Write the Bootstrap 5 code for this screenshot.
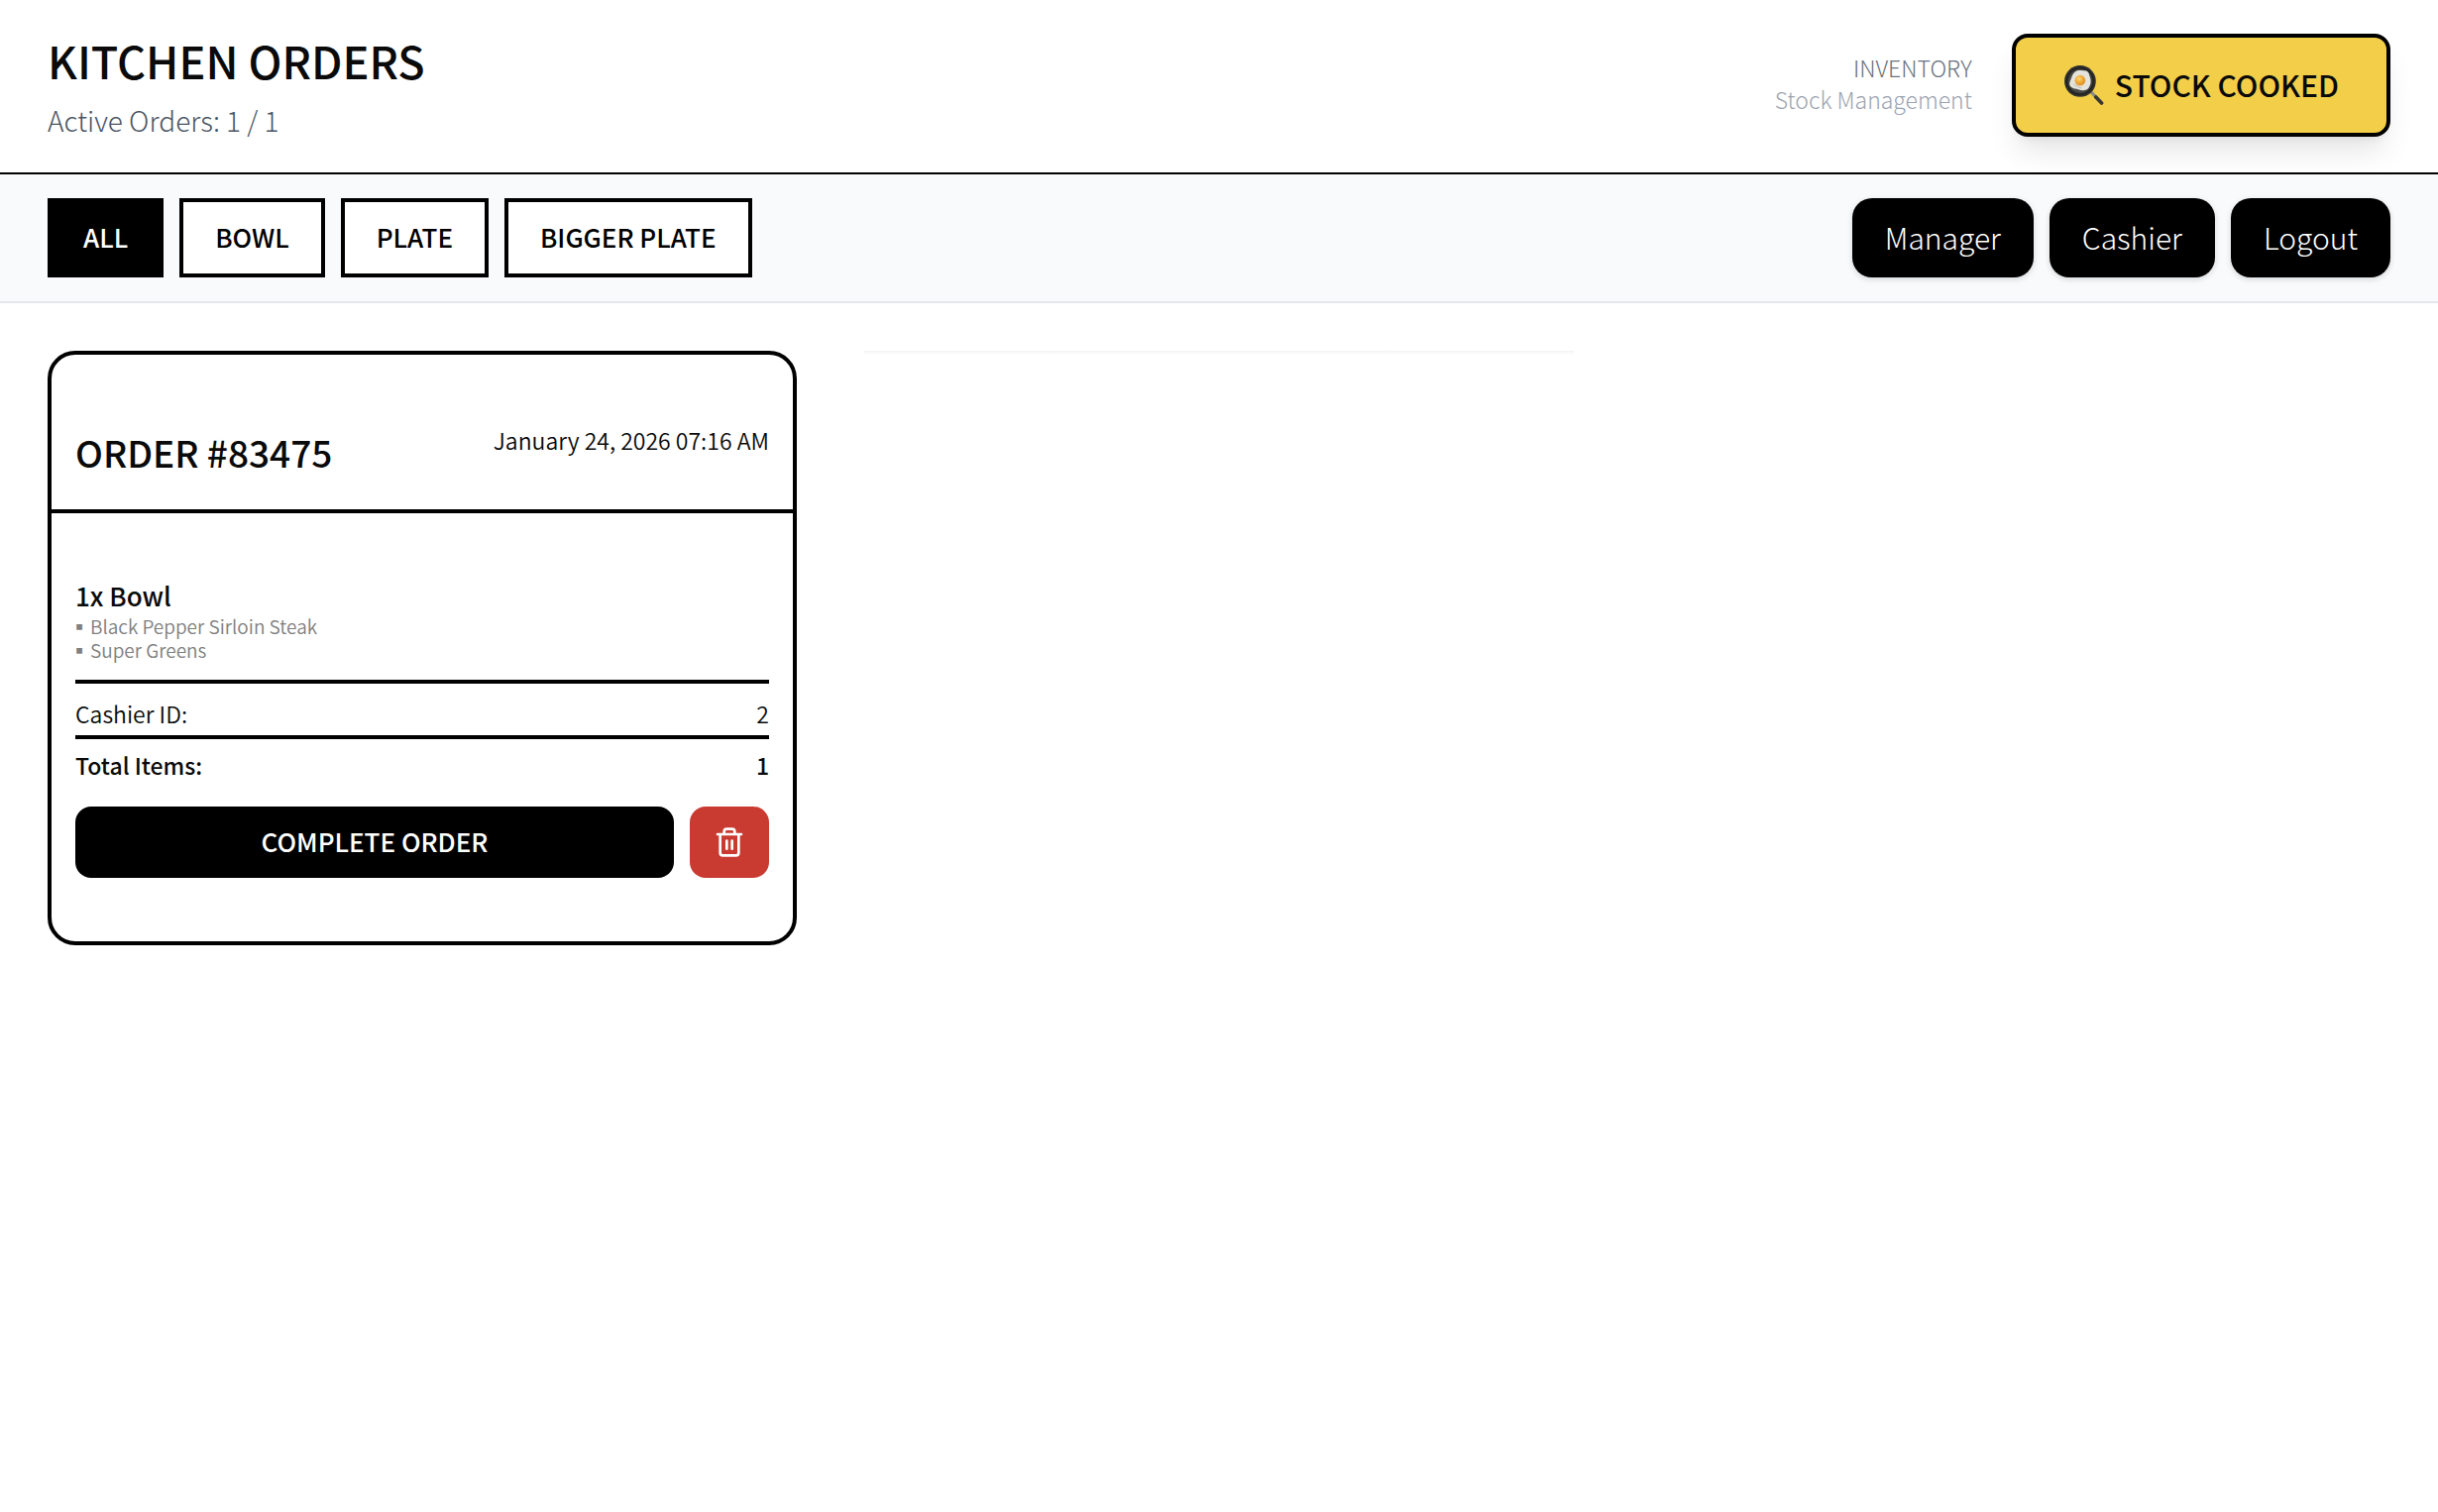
<!DOCTYPE html>
<html lang="en">
<head>
<meta charset="utf-8">
<meta name="viewport" content="width=device-width, initial-scale=1">
<title>Kitchen Orders</title>
<link href="https://cdn.jsdelivr.net/npm/bootstrap@5.3.0/dist/css/bootstrap.min.css" rel="stylesheet">
<style>
  :root { --ink: #0a0a0a; --gutter: 48px; }
  body { font-family: "Noto Sans CJK JP", "Noto Sans", sans-serif; font-weight: 300; color: var(--ink); background: #fff; }
  .page-head { padding: 33px var(--gutter); border-bottom: 2px solid #000; }
  .page-title { font-size: 45px; line-height: 56px; font-weight: 500; margin: 0 0 12px; }
  .page-sub { font-size: 28px; line-height: 40px; color: #4b5563; margin: 0; }
  .head-tools { gap: 40px; padding-bottom: 2px; }
  .stock-note { font-size: 23px; line-height: 32px; color: #6b7280; }
  .stock-note .faint { color: #9ca3af; }
  .btn { --bs-btn-font-weight: 500; line-height: 1; white-space: nowrap; display: inline-flex; align-items: center; justify-content: center; }
  .btn-stock { height: 104px; padding: 0 48px 2px; gap: 11px; font-size: 30px; border: 4px solid #000; border-radius: 16px; background: #f3ce49; color: var(--ink); box-shadow: 0 20px 30px -6px rgba(0,0,0,.1), 0 8px 12px -8px rgba(0,0,0,.1); }
  .btn-stock:hover { background: #eac33a; border-color: #000; }
  .tool-row { padding: 24px var(--gutter); background: #f9fafc; border-bottom: 2px solid #e5e7eb; }
  .btn-filter { height: 80px; padding: 0 32px 2px; font-size: 26px; border: 4px solid #000; border-radius: 0; background: #fff; color: #000; }
  .btn-filter:hover, .btn-filter.active { background: #000 !important; border-color: #000 !important; color: #fff !important; }
  .btn-nav { height: 80px; padding: 0 33px 2px; font-size: 30px; font-weight: 300; border: 0; border-radius: 20px; background: #000; color: #fff; box-shadow: 0 2px 6px rgba(0,0,0,.14); }
  .btn-nav:hover { background: #222; color: #fff; }
  .order-grid { display: grid; grid-template-columns: repeat(3, minmax(0, 1fr)); align-items: start; gap: 48px; padding: 48px var(--gutter); }
  .order-card { border: 4px solid #000; border-radius: 28px; color: var(--ink); font-weight: 350; }
  .order-head { padding: 72px 24px 32px; border-bottom: 4px solid #000; }
  .order-no { font-size: 37px; line-height: 52px; font-weight: 500; margin: 0; }
  .order-date { font-size: 23px; line-height: 28px; }
  .order-body { padding: 64px 24px; }
  .dish-name { font-size: 26px; line-height: 38px; font-weight: 500; margin: 0; }
  .dish-parts { font-size: 19px; line-height: 24px; color: #808080; }
  .dish-parts li { display: flex; gap: 7px; }
  .dish-parts li::before { content: "▪"; width: 8px; font-family: "Liberation Sans", sans-serif; font-size: 23px; }
  .sum-row { font-size: 23px; line-height: 32px; border-top: 4px solid #000; }
  .sum-cashier { margin-top: 18px; padding: 14px 0 6px; }
  .sum-total { padding-top: 10px; margin-bottom: 26px; font-weight: 500; }
  .btn-done, .btn-del { height: 72px; border: 0; border-radius: 16px; color: #fff; }
  .btn-done { padding: 0 24px 2px; font-size: 26px; background: #000; }
  .btn-done:hover { background: #222; color: #fff; }
  .btn-del { width: 80px; padding: 0; background: #c93a31; }
  .btn-del:hover { background: #b02f27; color: #fff; }
  .empty-slot { height: 4px; margin: 0 20px; background: linear-gradient(#f3f3f3, #fff); }
</style>
<script src="https://cdn.jsdelivr.net/npm/bootstrap@5.3.0/dist/js/bootstrap.bundle.min.js"></script>
</head>
<body>
<header class="page-head d-flex justify-content-between align-items-center">
  <div>
    <h1 class="page-title">KITCHEN ORDERS</h1>
    <p class="page-sub">Active Orders: 1 / 1</p>
  </div>
  <div class="head-tools d-flex align-items-center">
    <div class="stock-note text-end mb-1">
      <div>INVENTORY</div>
      <div class="faint">Stock Management</div>
    </div>
    <button type="button" class="btn btn-stock">
      <svg width="41" height="41" viewBox="0 0 40 40" aria-hidden="true">
        <defs>
          <radialGradient id="pan"><stop offset="0" stop-color="#666"/><stop offset=".8" stop-color="#4a4a47"/><stop offset="1" stop-color="#2c2c2b"/></radialGradient>
          <radialGradient id="yolk" cx=".4" cy=".35"><stop offset="0" stop-color="#ffd978"/><stop offset=".6" stop-color="#f2b040"/><stop offset="1" stop-color="#e39a2c"/></radialGradient>
        </defs>
        <path d="M27.5 27.5 33 33" stroke="#8b8b86" stroke-width="3"/>
        <path d="M32 32.2 37.6 38" stroke="#3a3835" stroke-width="3.6" stroke-linecap="round"/>
        <circle cx="16.5" cy="16.5" r="15.5" fill="#30302e"/>
        <circle cx="16.5" cy="16.5" r="13" fill="url(#pan)" stroke="#1c1c1c" stroke-width="1"/>
        <path d="M12 7C15 5 18 6.500 21 6c3.500 0 4.500 3 5 6 1 3 1.500 6 0 9-1 3-3 4.500-6 4.500-3 .5-5-1-8-1.500-3-.5-6-2-6-5 .5-3 1.500-4 2-6 .5-2 2-5 4-6z" fill="#e4e4dc"/>
        <path d="M10 19c1.500 3 5 3 8 4.500" fill="none" stroke="#c4c4ba" stroke-width="1"/>
        <circle cx="16.5" cy="15.8" r="5.2" fill="url(#yolk)"/>
      </svg>
      <span>STOCK COOKED</span>
    </button>
  </div>
</header>
<nav class="tool-row d-flex flex-wrap justify-content-between gap-3">
  <div class="d-flex flex-wrap gap-3">
    <button type="button" class="btn btn-filter active">ALL</button>
    <button type="button" class="btn btn-filter">BOWL</button>
    <button type="button" class="btn btn-filter">PLATE</button>
    <button type="button" class="btn btn-filter">BIGGER PLATE</button>
  </div>
  <div class="d-flex flex-wrap gap-3">
    <button type="button" class="btn btn-nav">Manager</button>
    <button type="button" class="btn btn-nav">Cashier</button>
    <button type="button" class="btn btn-nav">Logout</button>
  </div>
</nav>
<main class="order-grid">
  <article class="card order-card">
    <div class="order-head d-flex justify-content-between align-items-start">
      <h2 class="order-no">ORDER #83475</h2>
      <time class="order-date" datetime="2026-01-24T07:16">January 24, 2026 07:16 AM</time>
    </div>
    <div class="order-body">
      <h3 class="dish-name">1x Bowl</h3>
      <ul class="dish-parts list-unstyled mb-0">
        <li>Black Pepper Sirloin Steak</li>
        <li>Super Greens</li>
      </ul>
      <div class="sum-row sum-cashier d-flex justify-content-between"><span>Cashier ID:</span><span>2</span></div>
      <div class="sum-row sum-total d-flex justify-content-between"><span>Total Items:</span><span>1</span></div>
      <div class="d-flex gap-3">
        <button type="button" class="btn btn-done flex-grow-1">COMPLETE ORDER</button>
        <button type="button" class="btn btn-del" aria-label="Delete order">
          <svg width="32" height="32" viewBox="0 0 24 24" fill="none" stroke="currentColor" stroke-width="2" stroke-linecap="round" stroke-linejoin="round" aria-hidden="true"><path d="M3 6h18M19 6v14a2 2 0 0 1-2 2H7a2 2 0 0 1-2-2V6M8 6V4a2 2 0 0 1 2-2h4a2 2 0 0 1 2 2v2M10 11v6M14 11v6"/></svg>
        </button>
      </div>
    </div>
  </article>
  <div class="empty-slot"></div>
</main>
</body>
</html>
